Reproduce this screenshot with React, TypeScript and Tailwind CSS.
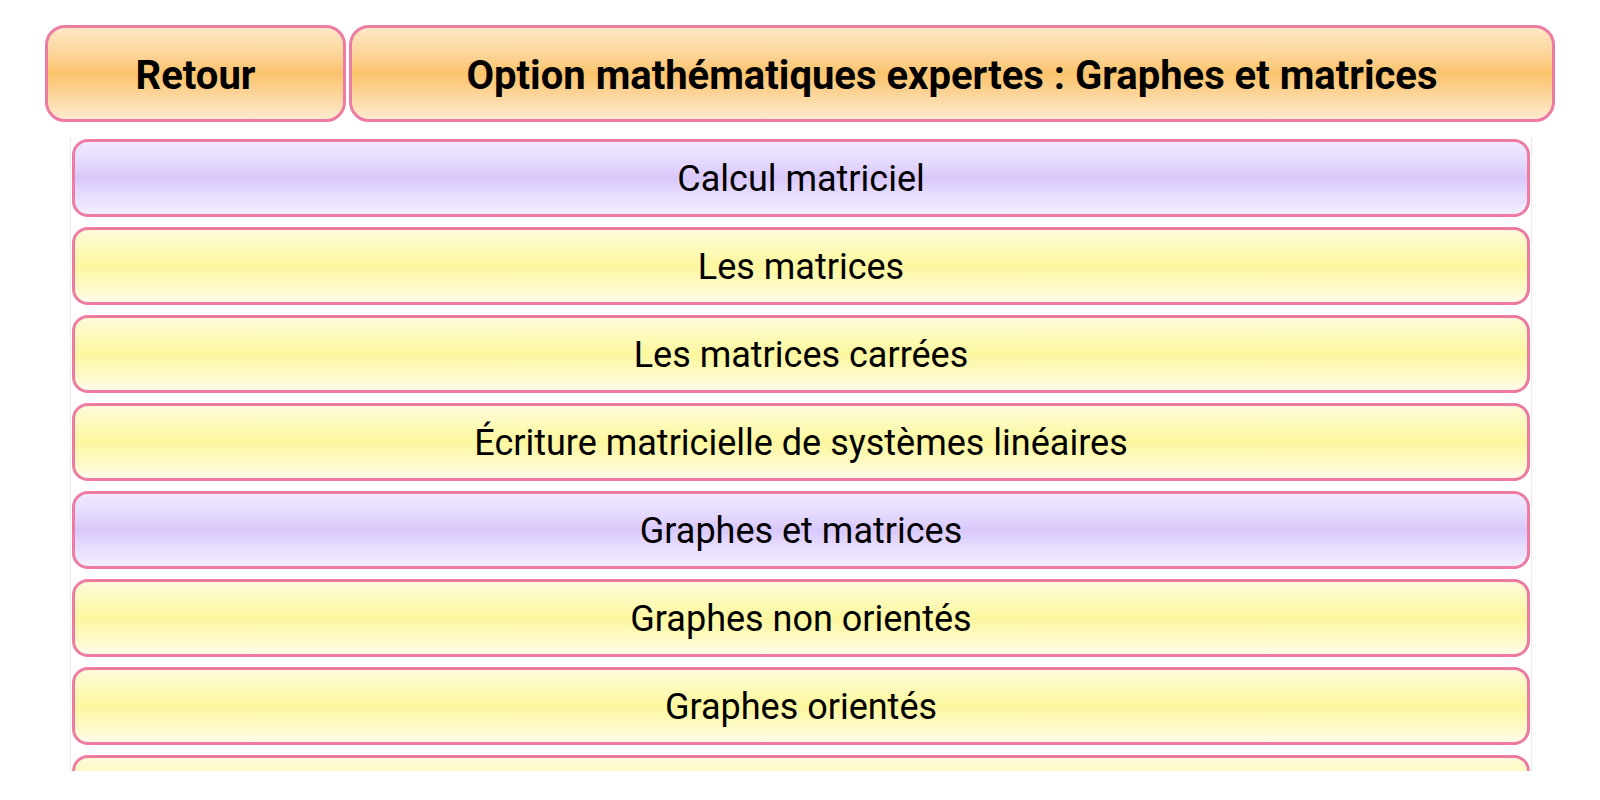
import React from 'react';

// the last row is cut off by the bottom of the window: no text of it is visible
const chapters: { title: string; section?: boolean }[] = [
  { title: 'Calcul matriciel', section: true },
  { title: 'Les matrices' },
  { title: 'Les matrices carrées' },
  { title: 'Écriture matricielle de systèmes linéaires' },
  { title: 'Graphes et matrices', section: true },
  { title: 'Graphes non orientés' },
  { title: 'Graphes orientés' },
  { title: '' },
];

const App: React.FC = () => {
  return (
    <div className="w-[1600px] h-[800px] bg-white overflow-hidden font-['Roboto',sans-serif] text-black">
      {/* En-tête */}
      <div className="flex gap-[3px] px-[45px] pt-[25px]">
        <button className="w-[301px] h-[97px] pt-[5px] rounded-[20px] border-[3px] border-[#ee7ba1] bg-[linear-gradient(to_bottom,#fde7c6,#fcd497_30%,#fbc36c_50%,#fcd498_72%,#feebcf)] text-[40px] font-bold">
          Retour
        </button>
        <div className="flex-1 h-[97px] pt-[5px] rounded-[20px] border-[3px] border-[#ee7ba1] bg-[linear-gradient(to_bottom,#fde7c6,#fcd497_30%,#fbc36c_50%,#fcd498_72%,#feebcf)] flex items-center justify-center text-[40px] font-bold">
          Option mathématiques expertes : Graphes et matrices
        </div>
      </div>

      {/* Liste des chapitres */}
      <div className="ml-[70px] w-[1462px] h-[632px] mt-[17px] overflow-hidden border-x border-dotted border-[#d8d8d8] px-[1px] flex flex-col gap-[10px]">
        {chapters.map((c, i) => (
          <div
            key={i}
            className={
              c.section
                ? 'h-[78px] shrink-0 pt-[2px] rounded-[16px] border-[3px] border-[#ee7ba1] bg-[linear-gradient(to_bottom,#f1eaff,#e4d8fe_30%,#d9c8fb_50%,#e6dcfe_72%,#f3eeff)] flex items-center justify-center text-[36px]'
                : 'h-[78px] shrink-0 pt-[2px] rounded-[16px] border-[3px] border-[#ee7ba1] bg-[linear-gradient(to_bottom,#fdfbd8,#fcf9b6_30%,#fcf79e_50%,#fdf9bb_72%,#fefce8)] flex items-center justify-center text-[36px]'
            }
          >
            {c.title}
          </div>
        ))}
      </div>
    </div>
  );
};

export default App;
